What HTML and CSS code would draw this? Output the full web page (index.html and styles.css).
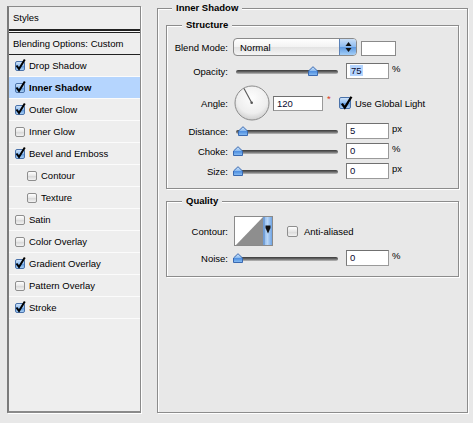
FILE: index.html
```html
<!DOCTYPE html>
<html>
<head>
<meta charset="utf-8">
<title>Layer Style</title>
<link rel="stylesheet" href="styles.css">
</head>
<body>
<svg class="defs" width="0" height="0" aria-hidden="true">
  <defs>
    <linearGradient id="tg" x1="0" y1="0" x2="0" y2="1">
      <stop offset="0" stop-color="#d9eafd"/>
      <stop offset="0.45" stop-color="#8dbcf0"/>
      <stop offset="0.55" stop-color="#4f8fe0"/>
      <stop offset="1" stop-color="#8cc0f4"/>
    </linearGradient>
    <radialGradient id="dg" cx="50%" cy="35%" r="65%">
      <stop offset="0" stop-color="#fdfdfd"/>
      <stop offset="0.7" stop-color="#eeeeee"/>
      <stop offset="1" stop-color="#cfcfcf"/>
    </radialGradient>
    <linearGradient id="bg" x1="0" y1="0" x2="1" y2="0">
      <stop offset="0" stop-color="#7fb0ea"/>
      <stop offset="0.5" stop-color="#b9d6f6"/>
      <stop offset="1" stop-color="#6fa4e4"/>
    </linearGradient>
  </defs>
</svg>
<div class="wrap">
  <div class="styles">
    <div class="hdr">Styles</div>
    <div class="dbl"></div>
    <div class="blendopt">Blending Options: Custom</div>
    <div class="item"><span class="cb on"><svg viewBox="0 0 13 13"><path d="M2.5 7.5 5 11 10.8 1.5"/></svg></span>Drop Shadow</div>
    <div class="item sel"><span class="cb on"><svg viewBox="0 0 13 13"><path d="M2.5 7.5 5 11 10.8 1.5"/></svg></span>Inner Shadow</div>
    <div class="item"><span class="cb on"><svg viewBox="0 0 13 13"><path d="M2.5 7.5 5 11 10.8 1.5"/></svg></span>Outer Glow</div>
    <div class="item"><span class="cb"></span>Inner Glow</div>
    <div class="item"><span class="cb on"><svg viewBox="0 0 13 13"><path d="M2.5 7.5 5 11 10.8 1.5"/></svg></span>Bevel and Emboss</div>
    <div class="item ind"><span class="cb"></span>Contour</div>
    <div class="item ind"><span class="cb"></span>Texture</div>
    <div class="item"><span class="cb"></span>Satin</div>
    <div class="item"><span class="cb"></span>Color Overlay</div>
    <div class="item"><span class="cb on"><svg viewBox="0 0 13 13"><path d="M2.5 7.5 5 11 10.8 1.5"/></svg></span>Gradient Overlay</div>
    <div class="item"><span class="cb"></span>Pattern Overlay</div>
    <div class="item"><span class="cb on"><svg viewBox="0 0 13 13"><path d="M2.5 7.5 5 11 10.8 1.5"/></svg></span>Stroke</div>
  </div>

  <fieldset class="grp outer">
    <legend>Inner Shadow</legend>

    <fieldset class="grp sub struct">
      <legend>Structure</legend>

      <div class="row r-blend">
        <div class="lbl">Blend Mode:</div>
        <div class="popup">
          <span class="ptext">Normal</span>
          <span class="pbtn"><svg width="9" height="12" viewBox="0 0 9 12"><path d="M4.5 1 7.5 5H1.5z M4.5 11 1.5 7h6z" fill="#111"/></svg></span>
        </div>
        <div class="swatch"></div>
      </div>

      <div class="row r-op">
        <div class="lbl">Opacity:</div>
        <div class="slider"><svg class="thumb t-op" viewBox="0 0 10 10"><path d="M0.5 9.5V5L5 0.7 9.5 5v4.5z" fill="url(#tg)" stroke="#3a69b0"/></svg></div>
        <div class="num"><span class="hl">75</span></div>
        <div class="unit">%</div>
      </div>

      <div class="row r-ang">
        <div class="lbl">Angle:</div>
        <svg class="dial" width="36" height="36" viewBox="0 0 36 36">
          <circle cx="18" cy="18" r="17" fill="url(#dg)" stroke="#8c8c8c"/>
          <path d="M17.7 17.7 10 3.5" stroke="#555" stroke-width="1.1"/>
          <circle cx="17.7" cy="17.7" r="1.3" fill="#555"/>
        </svg>
        <div class="num wide">120</div>
        <div class="ast">*</div>
        <span class="cb big on"><svg viewBox="0 0 13 13"><path d="M2.5 7.5 5 11 10.8 1.5"/></svg></span>
        <div class="cbtext">Use Global Light</div>
      </div>

      <div class="row">
        <div class="lbl">Distance:</div>
        <div class="slider"><svg class="thumb t-dist" viewBox="0 0 10 10"><path d="M0.5 9.5V5L5 0.7 9.5 5v4.5z" fill="url(#tg)" stroke="#3a69b0"/></svg></div>
        <div class="num">5</div>
        <div class="unit">px</div>
      </div>

      <div class="row">
        <div class="lbl">Choke:</div>
        <div class="slider"><svg class="thumb t-zero" viewBox="0 0 10 10"><path d="M0.5 9.5V5L5 0.7 9.5 5v4.5z" fill="url(#tg)" stroke="#3a69b0"/></svg></div>
        <div class="num">0</div>
        <div class="unit">%</div>
      </div>

      <div class="row">
        <div class="lbl">Size:</div>
        <div class="slider"><svg class="thumb t-zero" viewBox="0 0 10 10"><path d="M0.5 9.5V5L5 0.7 9.5 5v4.5z" fill="url(#tg)" stroke="#3a69b0"/></svg></div>
        <div class="num">0</div>
        <div class="unit">px</div>
      </div>
    </fieldset>

    <fieldset class="grp sub quality">
      <legend>Quality</legend>

      <div class="row r-contour">
        <div class="lbl">Contour:</div>
        <svg class="contour" width="39" height="30" viewBox="0 0 39 30">
          <rect x="0.5" y="0.5" width="38" height="29" fill="#fff" stroke="#8a8a8a"/>
          <path d="M2 29 29 1V29z" fill="#8e8e8e"/>
          <rect x="29" y="1" width="9" height="28" fill="url(#bg)"/>
          <path d="M30 1V29" stroke="#5a86c0"/>
          <path d="M31.5 9.5h5v2.5L34 17.5 31.5 12z" fill="#111"/>
        </svg>
        <span class="cb aa"></span>
        <div class="cbtext aatext">Anti-aliased</div>
      </div>

      <div class="row r-noise">
        <div class="lbl">Noise:</div>
        <div class="slider"><svg class="thumb t-zero" viewBox="0 0 10 10"><path d="M0.5 9.5V5L5 0.7 9.5 5v4.5z" fill="url(#tg)" stroke="#3a69b0"/></svg></div>
        <div class="num">0</div>
        <div class="unit">%</div>
      </div>
    </fieldset>
  </fieldset>
</div>
</body>
</html>
```

FILE: styles.css
```css
* { box-sizing: border-box; }
html, body { margin: 0; background: #e8e8e8; }
body {
  font-family: "Liberation Sans", Arial, sans-serif;
  font-size: 9.5px;
  color: #000;
  width: 473px;
  height: 423px;
  overflow: hidden;
}
.defs { display: block; width: 0; height: 0; }

.wrap { display: flex; align-items: flex-start; padding-left: 7px; }

/* left list */
.styles {
  margin-top: 6px;
  width: 134px;
  height: 407px;
  flex: none;
  background: #eeeeee;
  border: 1px solid #8a8a8a;
  border-left: 2px solid #7a7a7a;
  border-bottom: 2px solid #8a8a8a;
  box-shadow: 1px 1px 0 #fff;
}
.hdr { height: 22px; line-height: 22px; padding-left: 4px; }
.dbl { height: 4px; border-top: 2px solid #222; border-bottom: 1px solid #222; background: #fafafa; }
.blendopt { height: 22px; line-height: 21px; padding-left: 4px; border-bottom: 1px solid #222; }
.item {
  height: 22px;
  display: flex;
  align-items: center;
  padding-left: 6px;
  border-bottom: 1px solid #fbfbfb;
}
.item.sel { background: #b5d5fe; font-weight: bold; }
.item.ind { padding-left: 18px; }

/* checkboxes */
.cb {
  display: inline-block;
  flex: none;
  position: relative;
  width: 10px;
  height: 10px;
  margin-right: 4px;
  border: 1px solid #8e8e8e;
  border-radius: 2px;
  background: linear-gradient(#fefefe, #e6e6e6 50%, #d8d8d8 51%, #f2f2f2);
}
.cb.on {
  border-color: #4a72aa;
  background: linear-gradient(#cfe3f9, #8dbbef 50%, #5f98dc 51%, #a9d0f6);
}
.cb svg {
  position: absolute;
  left: -2px;
  top: -4px;
  width: 13px;
  height: 13px;
  overflow: visible;
}
.cb svg path { fill: none; stroke: #000; stroke-width: 2; stroke-linejoin: miter; }
.cb.big { width: 12px; height: 12px; margin-left: 7px; margin-right: 4px; }
.cb.big svg { left: -1px; top: -3px; width: 15px; height: 15px; }
.cb.aa { width: 11px; height: 11px; margin-left: 14px; margin-right: 6px; }

/* right side */
.grp {
  margin: 0;
  padding: 0;
  min-width: 0;
  border: 1px solid #8c8c8c;
  box-shadow: 1px 1px 0 #fff, inset 1px 1px 0 #fff;
}
.grp legend {
  font-weight: bold;
  padding: 0 4px;
  line-height: 14px;
  background: #e8e8e8;
}
.outer {
  flex: none;
  margin-top: 1px;
  margin-left: 16px;
  width: 311px;
  height: 412px;
  padding: 3px 8px 0 8px;
}
.outer > legend { margin-left: 6px; }
.sub { width: 293px; }
.sub > legend { margin-left: 15px; }
.struct { padding: 6px 0 7px 0; }
.quality { margin-top: 5px; padding: 8px 0 8px 0; }

.row { display: flex; align-items: center; height: 20px; }
.lbl { width: 61px; flex: none; text-align: right; }
.r-blend { height: 18px; }
.r-op { margin-top: 5px; }
.r-ang { height: 36px; margin-top: 4px; }
.r-contour { height: 30px; }
.r-noise { margin-top: 2px; }

.popup {
  margin-left: 5px;
  width: 124px;
  height: 18px;
  flex: none;
  display: flex;
  align-items: center;
  padding-left: 6px;
  border: 1px solid #8a8a8a;
  border-radius: 4px;
  background: linear-gradient(#ffffff, #f3f3f3 50%, #e2e2e2 51%, #f5f5f5);
  overflow: hidden;
}
.pbtn {
  margin-left: auto;
  width: 17px;
  height: 100%;
  display: flex;
  align-items: center;
  justify-content: center;
  border-left: 1px solid #5b82b8;
  background: linear-gradient(#c9def7, #8cbaf0 50%, #5d98e0 51%, #a4cff8);
}
.swatch {
  align-self: flex-end;
  margin-left: 4px;
  width: 35px;
  height: 15px;
  flex: none;
  background: #fff;
  border: 1px solid #8a8a8a;
}

.slider { position: relative; width: 102px; height: 20px; margin-left: 8px; flex: none; }
.slider::before {
  content: "";
  position: absolute;
  left: 0;
  right: 0;
  top: 9px;
  height: 4px;
  border-radius: 2px;
  background: linear-gradient(#3a3a3a, #6a6a6a 50%, #bdbdbd);
}
.thumb { position: absolute; top: 5px; width: 10px; height: 10px; }
.t-op { left: 72px; }
.t-dist { left: 2px; }
.t-zero { left: -3px; }

.num {
  margin-left: 8px;
  width: 43px;
  height: 16px;
  flex: none;
  padding-left: 3px;
  line-height: 14px;
  background: #fff;
  border: 1px solid #9a9a9a;
  border-top-color: #707070;
  border-left-color: #7a7a7a;
  color: #0a0a30;
}
.num.wide { margin-left: 3px; width: 50px; height: 15px; line-height: 13px; }
.hl { background: #b5d5fe; padding: 0 1px; }
.unit { margin-left: 3px; align-self: flex-start; margin-top: 2px; }
.dial { margin-left: 6px; flex: none; }
.ast { margin-left: 4px; align-self: flex-start; margin-top: 8px; color: #d83a1e; width: 5px; }
.cbtext { }
.contour { margin-left: 6px; flex: none; }
```
